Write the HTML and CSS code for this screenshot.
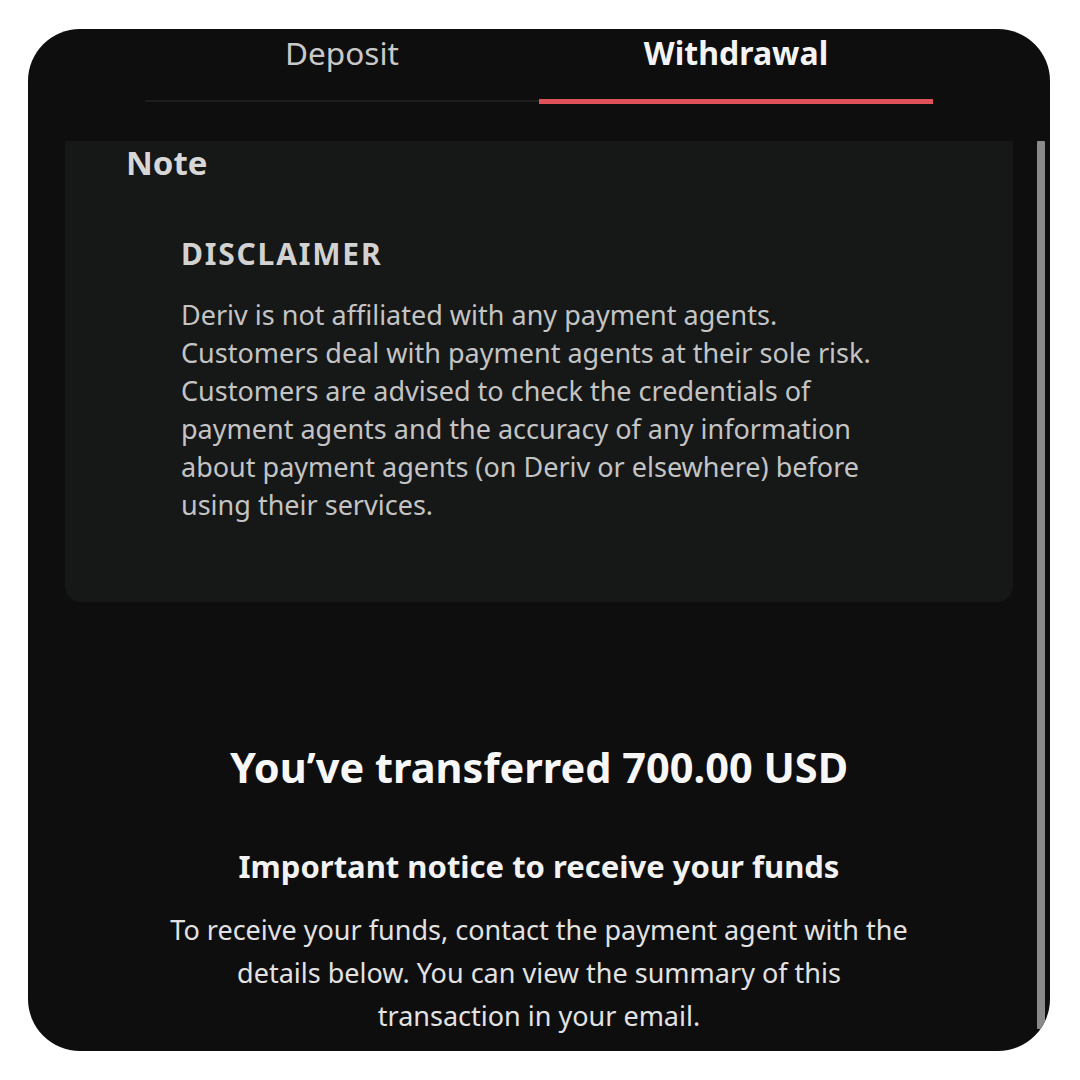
FILE: index.html
```html
<!DOCTYPE html>
<html lang="en">
<head>
<meta charset="utf-8">
<title>Withdrawal</title>
<link rel="stylesheet" href="styles.css">
</head>
<body>
<div class="phone">
  <div class="tabs">
    <div class="tab">Deposit</div>
    <div class="tab tab-active">Withdrawal</div>
  </div>
  <div class="scroll">
    <div class="content">
      <section class="note">
        <h2 class="note-title">Note</h2>
        <div class="note-body">
          <h3 class="disclaimer">DISCLAIMER</h3>
          <p class="disclaimer-text">Deriv is not affiliated with any payment agents.<br>Customers deal with payment agents at their sole risk.<br>Customers are advised to check the credentials of<br>payment agents and the accuracy of any information<br>about payment agents (on Deriv or elsewhere) before<br>using their services.</p>
        </div>
      </section>
      <section class="result">
        <h1 class="result-title">You’ve transferred 700.00 USD</h1>
        <h2 class="result-sub">Important notice to receive your funds</h2>
        <p class="result-text">To receive your funds, contact the payment agent with the<br>details below. You can view the summary of this<br>transaction in your email.</p>
      </section>
    </div>
    <div class="scrollbar"></div>
  </div>
</div>
</body>
</html>
```
FILE: styles.css
```css
* { box-sizing: border-box; }
html, body { margin: 0; padding: 0; background: #ffffff; }
body { font-family: "Noto Sans", "Open Sans", sans-serif; }

.phone {
  width: 1022px;
  height: 1022px;
  margin: 29px 0 0 28px;
  background: #0e0e0e;
  border-radius: 52px;
  overflow: hidden;
  display: flex;
  flex-direction: column;
}

.tabs {
  width: 788px;
  margin: 0 auto;
  display: grid;
  grid-template-columns: 1fr 1fr;
  height: 112px;
  flex-shrink: 0;
}

.tab {
  text-align: center;
  font-size: 31.5px;
  line-height: 40px;
  padding-top: 4px;
  height: 73px;
  color: #c9c9c9;
  border-bottom: 2px solid #1d1d1d;
}

.tab-active {
  color: #f4f4f4;
  font-weight: 700;
  font-size: 32px;
  border-bottom: 5px solid #e0515a;
  height: 75px;
}

.scroll {
  flex: 1;
  display: flex;
  min-height: 0;
}

.content {
  width: 948px;
  margin-left: 37px;
  overflow: hidden;
}

.scrollbar {
  width: 8px;
  margin-left: 24px;
  margin-bottom: 22px;
  background: #8a8a8a;
  border-radius: 1px;
}

.note {
  background: #161717;
  border-radius: 0 0 16px 16px;
  padding: 0 0 78px 61px;
}

.note-title {
  margin: 0;
  font-size: 33px;
  line-height: 44px;
  font-weight: 700;
  color: #d7d7d7;
}

.note-body {
  padding-left: 55px;
  padding-top: 50px;
}

.disclaimer {
  margin: 0;
  font-size: 30px;
  line-height: 38px;
  font-weight: 700;
  color: #d2d2d2;
  letter-spacing: 1.8px;
}

.disclaimer-text {
  margin: 23px 0 0;
  font-size: 27px;
  line-height: 38px;
  color: #c4c4c4;
}

.result {
  text-align: center;
  padding-top: 139px;
}

.result-title {
  margin: 0;
  font-size: 41.5px;
  line-height: 52px;
  font-weight: 700;
  color: #f7f7f7;
}

.result-sub {
  margin: 53px 0 0;
  font-size: 31px;
  line-height: 40px;
  font-weight: 700;
  color: #f2f2f2;
}

.result-text {
  margin: 22px 0 0;
  font-size: 27px;
  line-height: 43px;
  color: #e2e2e2;
}
```
